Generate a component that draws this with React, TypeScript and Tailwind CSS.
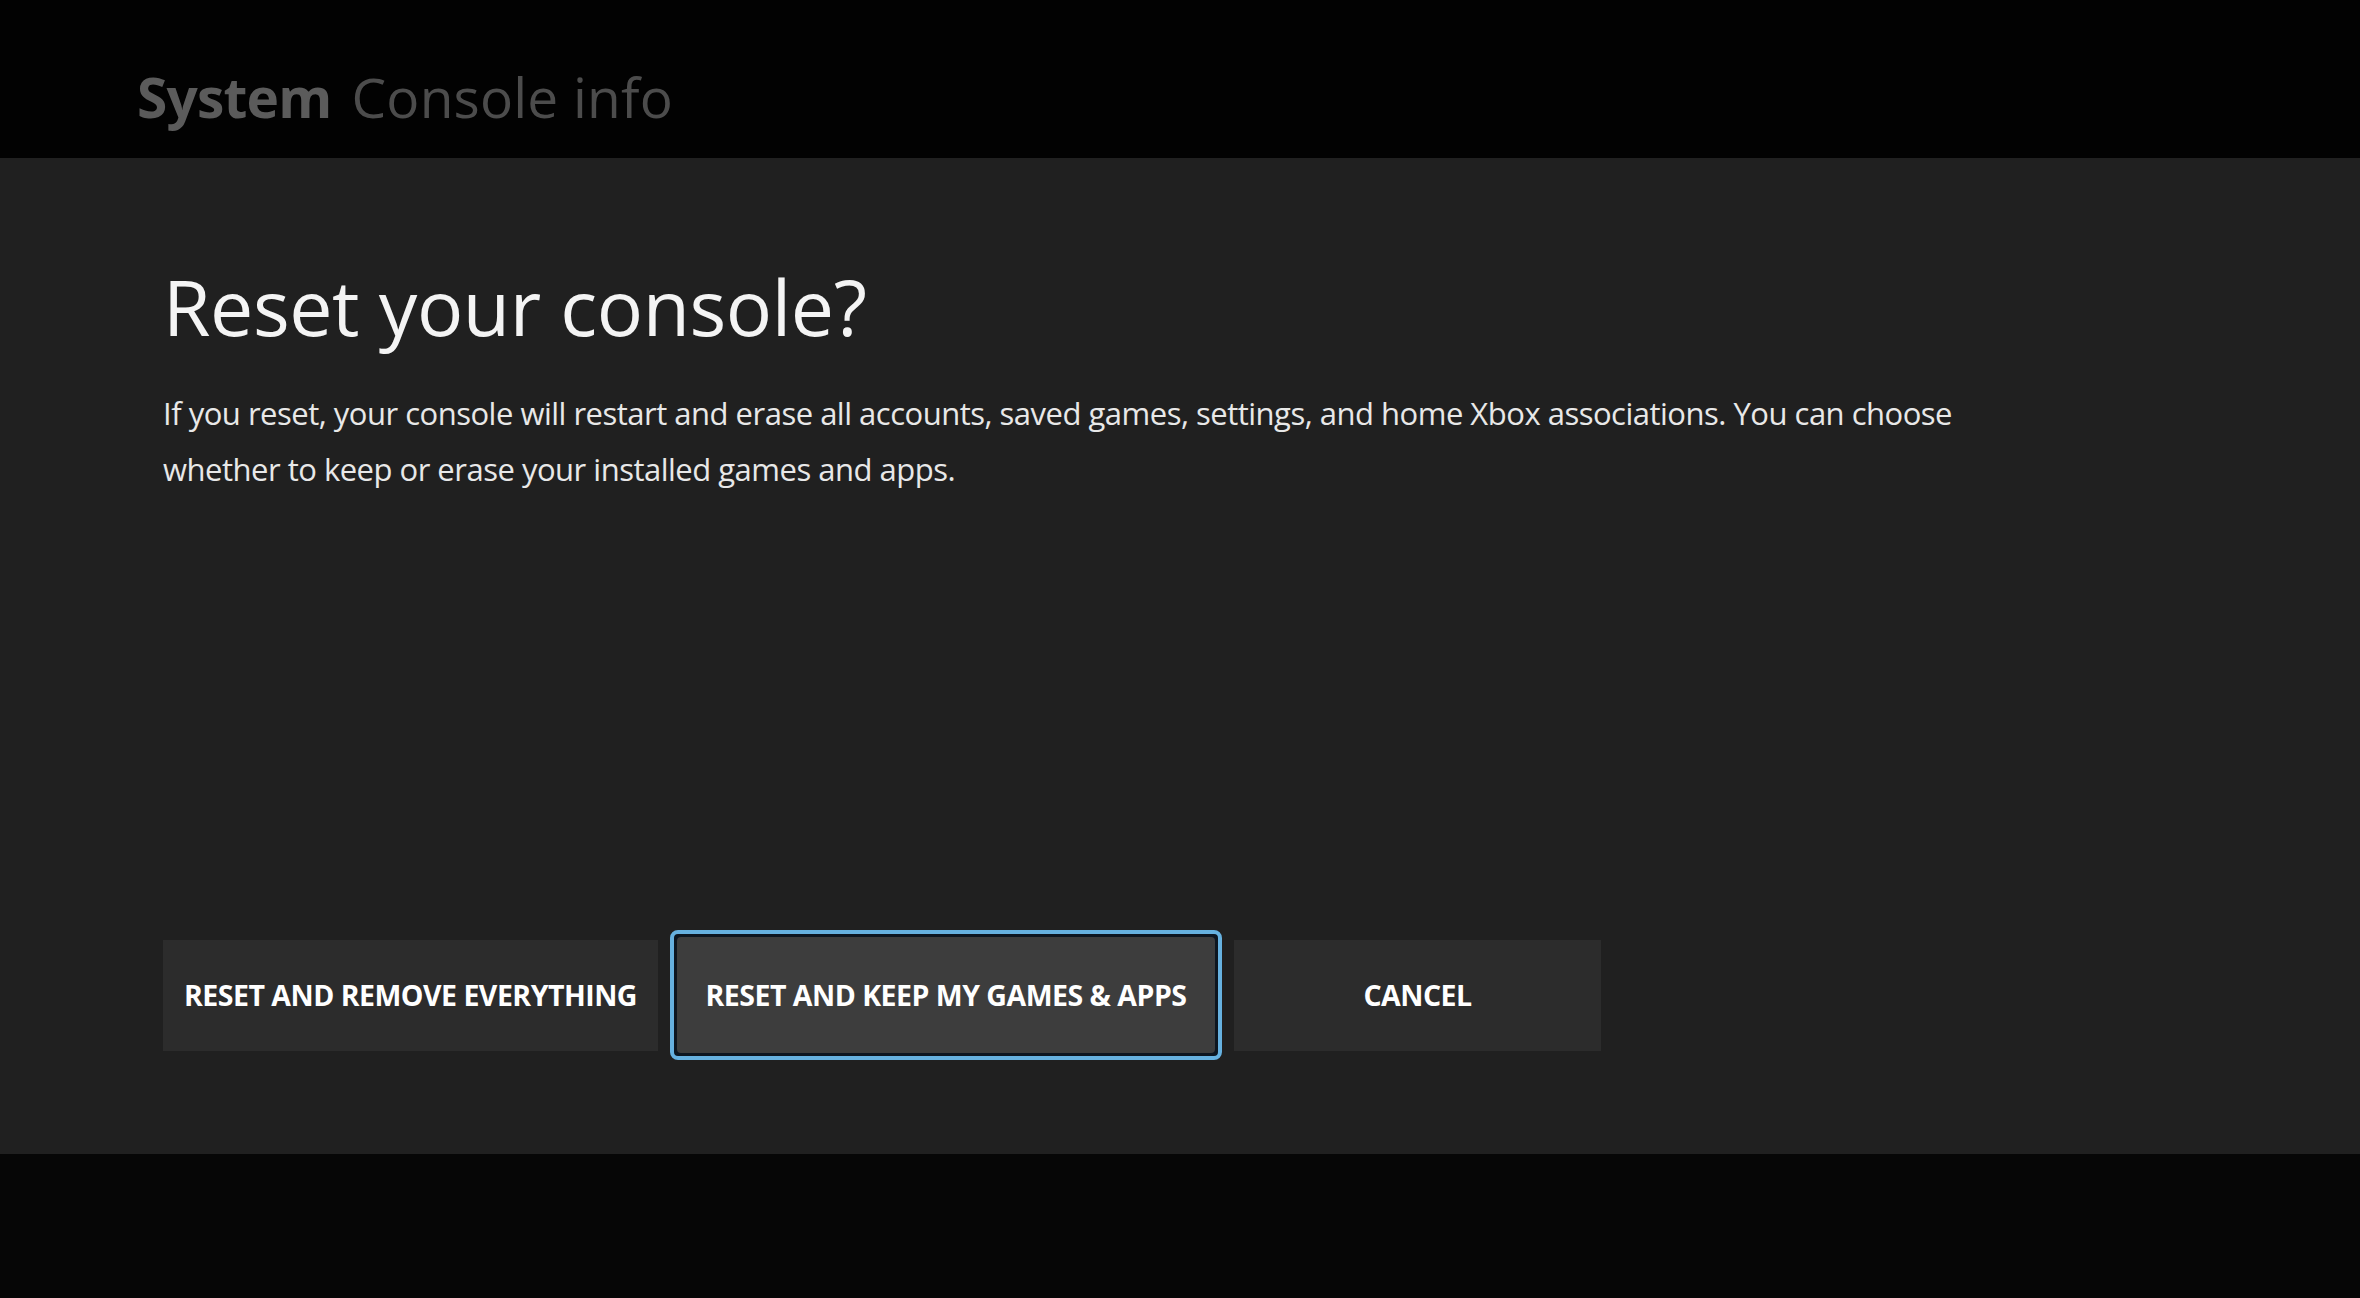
import React from "react";

const buttons = [
  { label: "RESET AND REMOVE EVERYTHING", width: "w-[495px]", focused: false },
  { label: "RESET AND KEEP MY GAMES & APPS", width: "w-[552px]", focused: true },
  { label: "CANCEL", width: "w-[367px]", focused: false },
];

export default function App() {
  return (
    <div className="w-[2360px] h-[1298px] flex flex-col bg-[#060606] font-['Open_Sans',sans-serif] overflow-hidden">
      {/* Header */}
      <div className="h-[158px] shrink-0 bg-[#020202] flex items-center pl-[137px] pt-[36px]">
        <span className="text-[55px] font-bold text-[#5b5b5b] tracking-[-0.8px]">System</span>
        <span className="text-[55px] text-[#4c4c4c] ml-[20px] tracking-[0.2px]">Console info</span>
      </div>

      {/* Dialog */}
      <div className="h-[996px] shrink-0 bg-[#202020] flex flex-col pl-[163px] pb-[94px]">
        <h1 className="mt-[110px] text-[77px] leading-none text-[#f4f4f4] tracking-[-0.4px]">
          Reset your console?
        </h1>
        <p className="mt-[40px] w-[1830px] text-[31px] leading-[56px] text-[#e8e8e8] tracking-[-0.5px]">
          If you reset, your console will restart and erase all accounts, saved games, settings, and home Xbox
          associations. You can choose whether to keep or erase your installed games and apps.
        </p>

        <div className="mt-auto flex items-center gap-[12px]">
          {buttons.map((b) =>
            b.focused ? (
              <div
                key={b.label}
                className={`${b.width} h-[130px] rounded-[8px] border-[4px] border-[#66b1e0] p-[3px] bg-[#0d1620]`}
              >
                <div className="w-full h-full rounded-[4px] bg-[#3d3d3d] flex items-center justify-center">
                  <span className="text-[28.5px] font-bold text-white tracking-[-0.5px]">{b.label}</span>
                </div>
              </div>
            ) : (
              <div
                key={b.label}
                className={`${b.width} h-[111px] bg-[#2c2c2c] flex items-center justify-center`}
              >
                <span className="text-[28.5px] font-bold text-white tracking-[-0.5px]">{b.label}</span>
              </div>
            )
          )}
        </div>
      </div>

      {/* Bottom */}
      <div className="flex-1 bg-[#060606]" />
    </div>
  );
}
